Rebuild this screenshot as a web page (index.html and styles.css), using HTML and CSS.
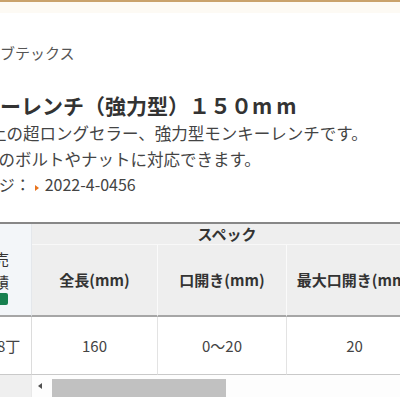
FILE: index.html
```html
<!DOCTYPE html>
<html lang="ja">
<head>
  <meta charset="UTF-8" />
  <meta name="viewport" content="width=device-width, initial-scale=1.0"/>
  <title>モンキーレンチ（強力型）１５０mm</title>
  <link rel="stylesheet" href="styles.css">
</head>
<body>

  <div class="topbar"></div>

  <div class="content">
    <p class="maker">ロブテックス</p>
    <h1 class="title">モンキーレンチ（強力型）１５０<span class="unit">mm</span></h1>
    <p class="desc">
      <span class="line line-1">発売以来半世紀以上の超ロングセラー、強力型モンキーレンチです。</span>
      <span class="line line-2">幅広いサイズのボルトやナットに対応できます。</span>
    </p>
    <p class="page-ref">掲載ページ：<span class="arrow"></span>2022-4-0456</p>
  </div>

  <div class="spec">
    <table class="spec-table">
      <colgroup>
        <col class="col-sales">
        <col class="col-len">
        <col class="col-open">
        <col class="col-max">
      </colgroup>
      <thead>
        <tr>
          <th class="sales" rowspan="2">販売<br>実績<span class="badge"></span></th>
          <th class="group" colspan="3">スペック</th>
        </tr>
        <tr>
          <th class="sub">全長(mm)</th>
          <th class="sub">口開き(mm)</th>
          <th class="sub">最大口開き(mm)</th>
        </tr>
      </thead>
      <tbody>
        <tr>
          <td class="sales">1,298丁</td>
          <td>160</td>
          <td>0～20</td>
          <td>20</td>
        </tr>
      </tbody>
    </table>
  </div>

  <div class="scrollbar">
    <div class="scroll-corner"></div>
    <div class="scroll-track">
      <span class="scroll-arrow"></span>
      <span class="scroll-thumb"></span>
    </div>
  </div>

</body>
</html>
```

FILE: styles.css
```css
body {
  margin: 0;
  overflow: hidden;
  font-family: "Noto Sans CJK JP", "Noto Sans", sans-serif;
  background: #ffffff;
  color: #444;
}

.topbar {
  height: 11px;
  border-top: 2px solid #c9a26c;
  background: #fdfaf4;
}

.content {
  padding-top: 29px;
}

.maker {
  margin: 0;
  font-size: 15px;
  line-height: 22px;
  color: #555;
  white-space: nowrap;
  text-indent: -15px;
}

.title {
  margin: 26px 0 1px;
  font-size: 21px;
  line-height: 30px;
  font-weight: bold;
  color: #333;
  white-space: nowrap;
  text-indent: -63px;
}

.title .unit {
  letter-spacing: 4px;
}

.desc {
  margin: 0;
  font-size: 16.5px;
  line-height: 25.6px;
  white-space: nowrap;
}

.line {
  display: block;
}

.line-1 {
  text-indent: -142px;
}

.line-2 {
  text-indent: -100px;
}

.page-ref {
  margin: 0;
  font-size: 16px;
  line-height: 25.6px;
  white-space: nowrap;
  text-indent: -65px;
}

.arrow {
  display: inline-block;
  width: 0;
  height: 0;
  margin: 0 6px 0 4px;
  border-top: 3px solid transparent;
  border-bottom: 3px solid transparent;
  border-left: 4px solid #e8741e;
}

.spec {
  margin: 24px 0 0 -43px;
}

.spec-table {
  width: 466px;
  table-layout: fixed;
  border-collapse: separate;
  border-spacing: 0;
  border-top: 2px solid #878787;
}

.col-sales { width: 75px; }
.col-len { width: 126px; }
.col-open { width: 129px; }
.col-max { width: 136px; }

.spec-table th {
  padding: 0;
  background: #eeeeee;
  color: #333;
  font-size: 15px;
  font-weight: bold;
  line-height: 20px;
  text-align: center;
  border-right: 1px solid #fafafa;
}

.spec-table th.group {
  border-bottom: 1px solid #f8f8f8;
}

.spec-table th.sub {
  padding: 25px 0;
  border-bottom: 2px solid #a6a6a6;
}

.spec-table th.sales {
  vertical-align: top;
  padding-top: 23px;
  line-height: 23px;
  font-weight: normal;
  background: #f3f6f9;
  border-right: 1px solid #e4e7eb;
  border-bottom: 2px solid #a6a6a6;
}

.badge {
  display: block;
  width: 28px;
  height: 12px;
  margin: 0 auto;
  border-radius: 2px;
  background: #17804f;
}

.spec-table td {
  padding: 19px 0 18px;
  font-size: 15px;
  line-height: 20px;
  text-align: center;
  color: #444;
  border-right: 1px solid #e3e3e3;
  border-bottom: 1px solid #c9c9c9;
}

.spec-table td.sales {
  border-right-color: #dcdcdc;
}

.scrollbar {
  display: flex;
  height: 22px;
}

.scroll-corner {
  width: 31px;
  background: #efefef;
}

.scroll-track {
  flex: 1;
  display: flex;
  align-items: flex-start;
  background: #fdfdfd;
  border-left: 1px solid #e8e8e8;
}

.scroll-arrow {
  width: 0;
  height: 0;
  margin: 8px 0 0 6px;
  border-top: 3px solid transparent;
  border-bottom: 3px solid transparent;
  border-right: 4px solid #505050;
}

.scroll-thumb {
  width: 174px;
  height: 20px;
  margin: 4px 0 0 10px;
  background: #c1c1c1;
}
```
